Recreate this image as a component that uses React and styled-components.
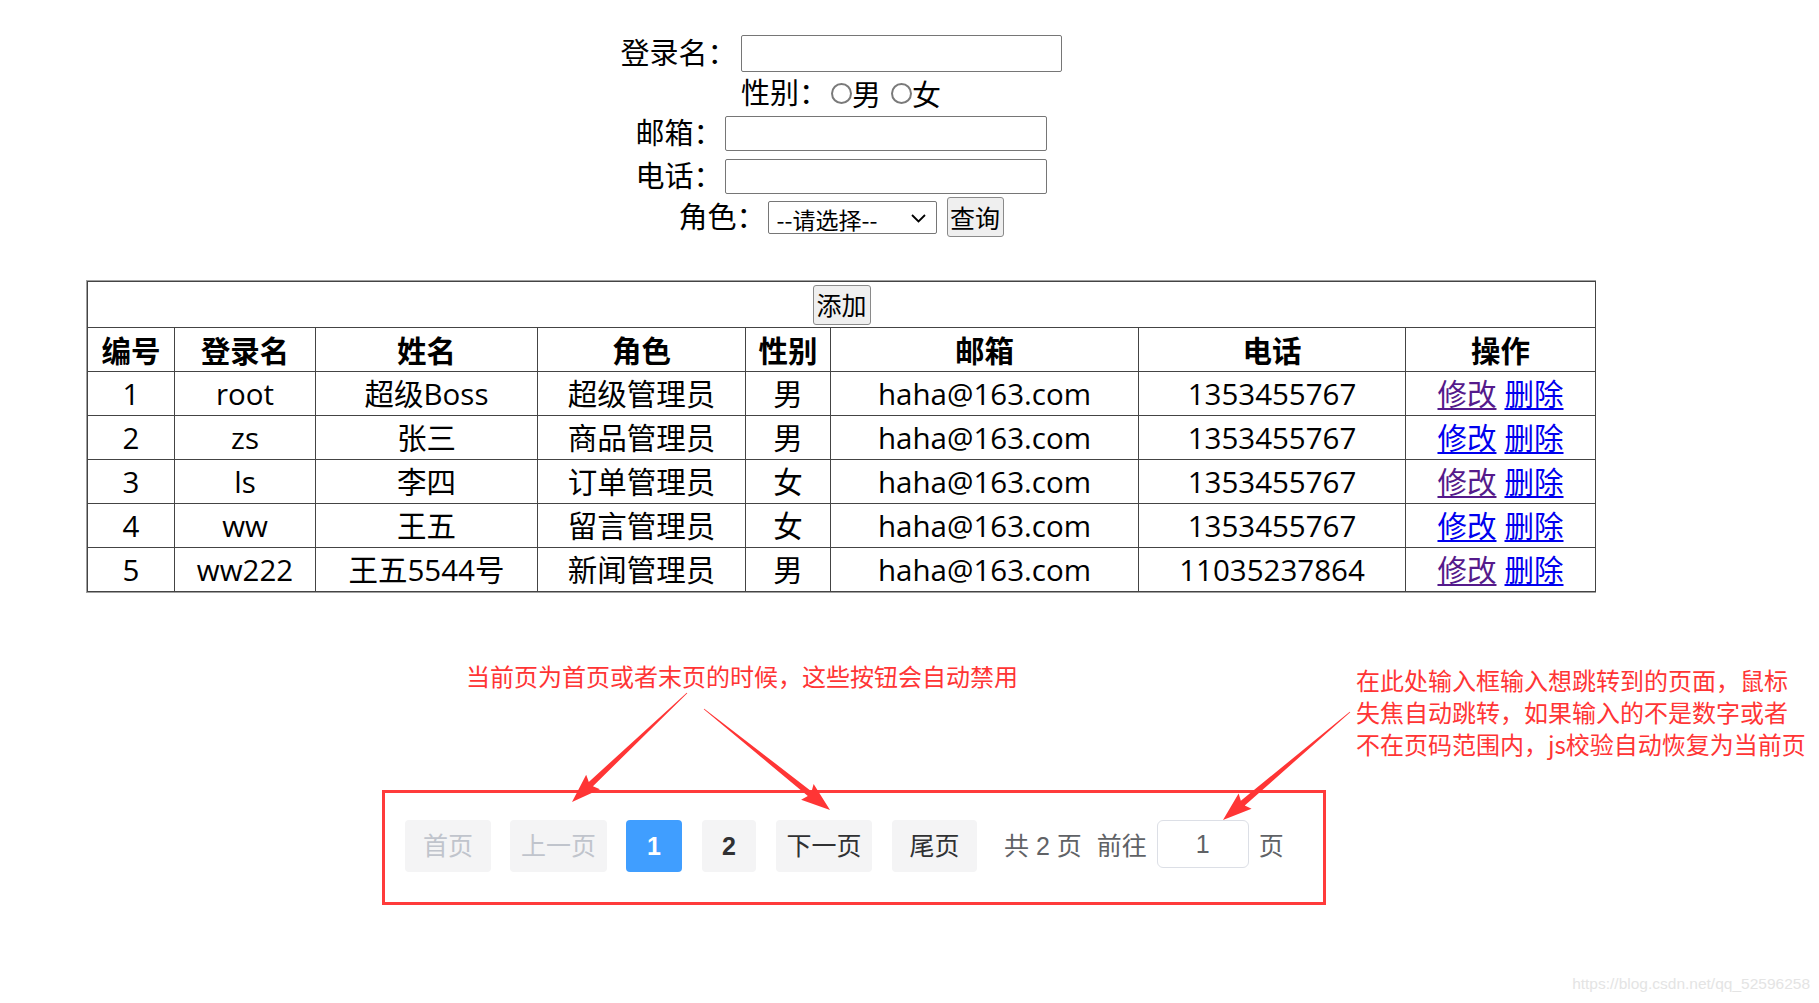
import React from 'react';
import styled, { createGlobalStyle } from 'styled-components';

const GlobalStyle = createGlobalStyle`
  html, body {
    margin: 0;
    padding: 0;
    background: #fff;
  }
  body {
    font-family: "Open Sans", "Noto Sans CJK SC", sans-serif;
    color: #000;
  }
`;

const Page = styled.div`
  position: relative;
  width: 1819px;
  height: 1003px;
  overflow: hidden;
`;

const Main = styled.div`
  width: 1510px;
  margin-left: 86px;
`;

const SearchForm = styled.form`
  padding-top: 33px;
  font-size: 29px;
  line-height: 1;
  font-family: "Noto Sans CJK SC", sans-serif;
`;

const FormRow = styled.div`
  display: flex;
  align-items: center;
  justify-content: center;
  height: ${p => p.h}px;
`;

const Label = styled.span`
  margin-right: ${p => p.gap || 2}px;
  white-space: nowrap;
  position: relative;
  top: -2px;
`;

const TextInput = styled.input`
  box-sizing: border-box;
  width: ${p => p.w}px;
  height: ${p => p.h}px;
  border: 1px solid #767676;
  border-radius: 2px;
  padding: 0 4px;
  font-size: 22px;
`;

const Radio = styled.span`
  box-sizing: border-box;
  width: 21px;
  height: 21px;
  border: 2px solid #7a7a7a;
  border-radius: 50%;
  margin-left: ${p => p.ml || 0}px;
`;

const SelectWrap = styled.span`
  position: relative;
  display: inline-flex;
  margin-right: 10px;
`;

const RoleSelect = styled.select`
  box-sizing: border-box;
  appearance: none;
  width: 169px;
  height: 33px;
  border: 1px solid #767676;
  border-radius: 2px;
  padding: 0 0 0 8px;
  font-size: 23px;
  font-family: "Noto Sans CJK SC", sans-serif;
  color: #000;
  background: #fff;
`;

const Chevron = styled.svg`
  position: absolute;
  right: 11px;
  top: 13px;
  pointer-events: none;
`;

const PlainButton = styled.button`
  box-sizing: border-box;
  width: ${p => p.w}px;
  height: 40px;
  padding: 0;
  background: #efefef;
  border: 1px solid #8a8a8a;
  border-radius: 3px;
  font-size: 25px;
  line-height: 1;
  font-family: "Noto Sans CJK SC", sans-serif;
  color: #000;
`;

const TableFrame = styled.div`
  margin-top: 43px;
  border: 1px solid #a0a0a0;
`;

const UserTable = styled.table`
  width: 100%;
  table-layout: fixed;
  border-collapse: collapse;
  font-size: 29.5px;
`;

const Cell = styled.td`
  border: 1.5px solid #444;
  text-align: center;
  padding: 0;
  height: ${p => p.h || 43}px;
  white-space: nowrap;
  line-height: 1;
`;

const HeadCell = styled.th`
  border: 1.5px solid #444;
  text-align: center;
  padding: 0;
  height: 43px;
  font-weight: 700;
  font-family: "Noto Sans CJK SC", sans-serif;
  line-height: 1;
`;

const ActionLink = styled.a`
  color: ${p => (p.visited ? '#551a8b' : '#0000ee')};
  text-decoration: underline;
  text-underline-offset: 3px;
  margin: 0 4px;
  font-family: "Noto Sans CJK SC", sans-serif;
`;

const Notes = styled.div`
  display: flex;
  align-items: flex-start;
  margin-top: 67px;
  padding-left: 466px;
  font-family: "Noto Sans CJK SC", sans-serif;
  font-size: 24px;
  line-height: 32px;
  color: #ff3535;
  white-space: nowrap;
`;

const Note = styled.div`
  margin-left: ${p => p.ml || 0}px;
  margin-top: ${p => p.mt || 0}px;
`;

const Pager = styled.div`
  box-sizing: border-box;
  display: flex;
  align-items: flex-start;
  width: 944px;
  height: 115px;
  margin: 30px 0 0 382px;
  padding: 27px 0 0 20px;
  border: 3px solid #ff3b3b;
  font-family: "Liberation Sans", "Noto Sans CJK SC", sans-serif;
  font-size: 25px;
  line-height: 1;
  color: #606266;
`;

const PageBtn = styled.div`
  box-sizing: border-box;
  display: flex;
  align-items: center;
  justify-content: center;
  width: ${p => p.w}px;
  height: 52px;
  margin-right: ${p => p.mr ?? 20}px;
  border-radius: 4px;
  background: ${p => (p.active ? '#409eff' : '#f4f4f5')};
  color: ${p => (p.active ? '#fff' : p.disabled ? '#c0c4cc' : '#303133')};
  font-weight: ${p => (p.num ? 700 : 400)};
`;

const PagerText = styled.span`
  display: flex;
  align-items: center;
  height: 52px;
  margin-left: ${p => p.ml || 0}px;
  white-space: nowrap;
`;

const JumpInput = styled.div`
  box-sizing: border-box;
  width: 92px;
  height: 48px;
  margin: 0 10px 0 10px;
  border: 1px solid #dcdfe6;
  border-radius: 6px;
  display: flex;
  align-items: center;
  justify-content: center;
  color: #606266;
`;

const Overlay = styled.svg`
  position: absolute;
  left: 0;
  top: 0;
  pointer-events: none;
`;

const Watermark = styled.div`
  position: absolute;
  right: 9px;
  bottom: 10px;
  font-family: "Liberation Sans", Arial, sans-serif;
  font-size: 15.5px;
  color: #e4e4e4;
`;

const users = [
  ['1', 'root', '超级Boss', '超级管理员', '男', 'haha@163.com', '1353455767'],
  ['2', 'zs', '张三', '商品管理员', '男', 'haha@163.com', '1353455767'],
  ['3', 'ls', '李四', '订单管理员', '女', 'haha@163.com', '1353455767'],
  ['4', 'ww', '王五', '留言管理员', '女', 'haha@163.com', '1353455767'],
  ['5', 'ww222', '王五5544号', '新闻管理员', '男', 'haha@163.com', '11035237864'],
];

const colWidths = [87, 141, 222, 208, 85, 308, 267, 190];
const headers = ['编号', '登录名', '姓名', '角色', '性别', '邮箱', '电话', '操作'];

// tapered arrow from tail (x1,y1) to tip (x2,y2)
const arrowPoints = (x1, y1, x2, y2) => {
  const dx = x2 - x1;
  const dy = y2 - y1;
  const len = Math.hypot(dx, dy);
  const ux = dx / len;
  const uy = dy / len;
  const nx = -uy;
  const ny = ux;
  const bx = x2 - ux * 26;
  const by = y2 - uy * 26;
  const pts = [
    [x1 + nx * 0.4, y1 + ny * 0.4],
    [bx + nx * 3, by + ny * 3],
    [bx + nx * 10 - ux * 3, by + ny * 10 - uy * 3],
    [x2, y2],
    [bx - nx * 10 - ux * 3, by - ny * 10 - uy * 3],
    [bx - nx * 3, by - ny * 3],
    [x1 - nx * 0.4, y1 - ny * 0.4],
  ];
  return pts.map(p => p.join(',')).join(' ');
};

const arrows = [
  [687, 693, 572, 802],
  [704, 709, 830, 810],
  [1350, 712, 1223, 820],
];

const App = () => {
  return (
    <Page>
      <GlobalStyle />
      <Main>
        <SearchForm>
          <FormRow h={41}>
            <Label gap={4}>登录名：</Label>
            <TextInput w={321} h={37} />
          </FormRow>
          <FormRow h={38}>
            <Label gap={3}>性别：</Label>
            <Radio />男
            <Radio ml={10} />女
          </FormRow>
          <FormRow h={43}>
            <Label>邮箱：</Label>
            <TextInput w={322} h={35} />
          </FormRow>
          <FormRow h={42}>
            <Label>电话：</Label>
            <TextInput w={322} h={35} />
          </FormRow>
          <FormRow h={40}>
            <Label>角色：</Label>
            <SelectWrap>
              <RoleSelect defaultValue="">
                <option value="">--请选择--</option>
              </RoleSelect>
              <Chevron width="15" height="9" viewBox="0 0 15 9">
                <path d="M1 1 L7.5 7.5 L14 1" fill="none" stroke="#000" strokeWidth="1.8" />
              </Chevron>
            </SelectWrap>
            <PlainButton type="button" w={57}>查询</PlainButton>
          </FormRow>
        </SearchForm>

        <TableFrame>
          <UserTable>
            <colgroup>
              {colWidths.map((w, i) => (
                <col key={i} style={{ width: w }} />
              ))}
            </colgroup>
            <tbody>
              <tr>
                <Cell colSpan={8} h={45}>
                  <PlainButton type="button" w={58}>添加</PlainButton>
                </Cell>
              </tr>
              <tr>
                {headers.map(h => (
                  <HeadCell key={h}>{h}</HeadCell>
                ))}
              </tr>
              {users.map((u, i) => (
                <tr key={u[0]}>
                  {u.map((v, j) => (
                    <Cell key={j}>{v}</Cell>
                  ))}
                  <Cell>
                    <ActionLink href="#" visited={i % 2 === 0}>修改</ActionLink>
                    <ActionLink href="#">删除</ActionLink>
                  </Cell>
                </tr>
              ))}
            </tbody>
          </UserTable>
        </TableFrame>
      </Main>

      <Notes>
        <Note>当前页为首页或者末页的时候，这些按钮会自动禁用</Note>
        <Note ml={338} mt={4}>
          在此处输入框输入想跳转到的页面，鼠标<br />
          失焦自动跳转，如果输入的不是数字或者<br />
          不在页码范围内，js校验自动恢复为当前页
        </Note>
      </Notes>

      <Pager>
        <PageBtn w={86} mr={19} disabled>首页</PageBtn>
        <PageBtn w={97} mr={19} disabled>上一页</PageBtn>
        <PageBtn w={56} active num>1</PageBtn>
        <PageBtn w={54} num>2</PageBtn>
        <PageBtn w={96}>下一页</PageBtn>
        <PageBtn w={85} mr={0}>尾页</PageBtn>
        <PagerText ml={27}>共 2 页</PagerText>
        <PagerText ml={15}>前往</PagerText>
        <JumpInput>1</JumpInput>
        <PagerText>页</PagerText>
      </Pager>

      <Overlay width="1819" height="1003" viewBox="0 0 1819 1003">
        {arrows.map((a, i) => (
          <polygon key={i} points={arrowPoints(...a)} fill="#ff3535" />
        ))}
      </Overlay>

      <Watermark>https://blog.csdn.net/qq_52596258</Watermark>
    </Page>
  );
};

export default App;
